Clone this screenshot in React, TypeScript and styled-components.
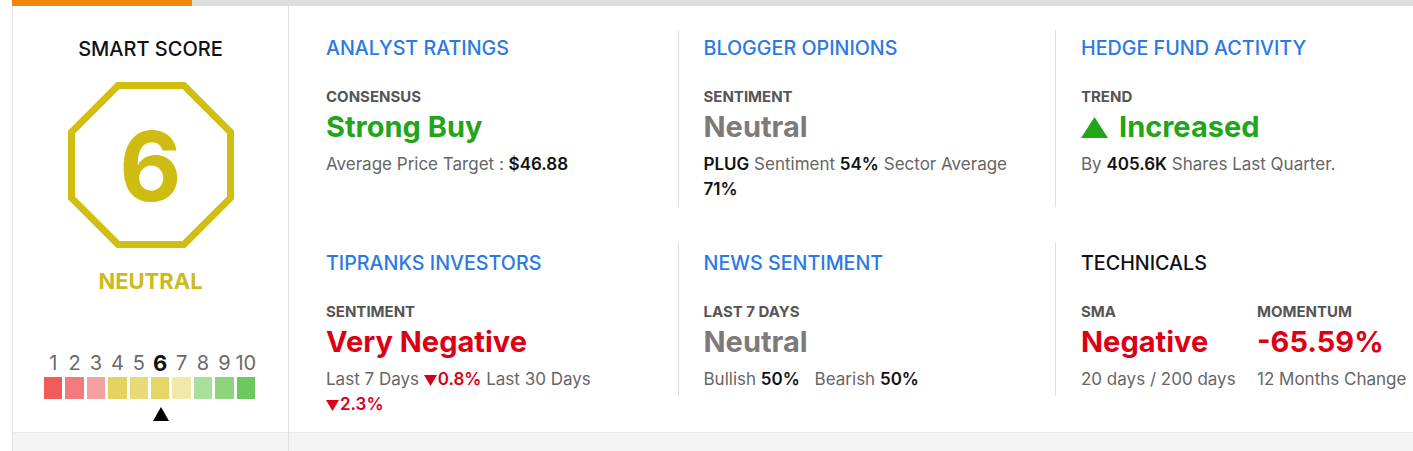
import React from "react";
import styled, { createGlobalStyle } from "styled-components";

const GlobalStyle = createGlobalStyle`
  html, body { margin: 0; padding: 0; overflow: hidden; background: #fff; }
  body { font-family: Inter, "Noto Sans", Lato, sans-serif; color: #111; }
  * { box-sizing: border-box; }
`;

const FONT = `Inter, "Noto Sans", "DejaVu Sans", sans-serif`;

const Page = styled.div`
  padding-left: 12px;
  width: 1460px;
`;

const TopBar = styled.div`
  height: 6px;
  background: #dddddd;
  display: flex;
`;

const TopBarFill = styled.div<{ $width: number }>`
  width: ${(p) => p.$width}px;
  height: 100%;
  background: #f08709;
`;

const Card = styled.div`
  display: flex;
  height: 445px;
  border-left: 1px solid #e3e3e3;
  background: #f4f4f4;
  font-family: ${FONT};
`;

const ScorePanel = styled.div`
  width: 276px;
  flex: none;
  border-right: 1px solid #e0e0e0;
`;

const ScoreBody = styled.div`
  height: 427px;
  background: #fff;
  border-bottom: 1px solid #ebebeb;
  display: flex;
  flex-direction: column;
  align-items: center;
  padding-top: 31px;
`;

const ScoreTitle = styled.div`
  font-size: 20px;
  line-height: 24px;
  font-weight: 500;
  color: #111;
`;

const OctagonWrap = styled.div`
  position: relative;
  width: 166px;
  height: 166px;
  margin-top: 21px;
  display: grid;
  place-items: center;
  svg {
    position: absolute;
    inset: 0;
  }
`;

const ScoreNumber = styled.div`
  position: relative;
  font-size: 96px;
  line-height: 1;
  font-weight: 700;
  color: #cfbc12;
  margin-top: 2px;
`;

const ScoreLabel = styled.div`
  margin-top: 20px;
  font-size: 22px;
  line-height: 26px;
  font-weight: 700;
  color: #cdbb1e;
`;

const ScaleGrid = styled.div<{ $mt: number }>`
  display: grid;
  grid-template-columns: repeat(10, 18.5px);
  column-gap: 2.9px;
  margin-top: ${(p) => p.$mt}px;
  margin-right: 2px;
`;

const ScaleDigit = styled.div<{ $active: boolean }>`
  text-align: center;
  font-size: ${(p) => (p.$active ? 22 : 20)}px;
  line-height: 22px;
  font-weight: ${(p) => (p.$active ? 700 : 400)};
  color: ${(p) => (p.$active ? "#111" : "#6a6a6a")};
  white-space: nowrap;
  display: flex;
  justify-content: center;
`;

const ScaleBox = styled.div<{ $color: string }>`
  height: 22px;
  background: ${(p) => p.$color};
`;

const ScaleMarker = styled.div<{ $col: number }>`
  grid-column: ${(p) => p.$col};
  justify-self: center;
  width: 0;
  height: 0;
  border-left: 8.5px solid transparent;
  border-right: 8.5px solid transparent;
  border-bottom: 14px solid #000;
  margin-left: 1px;
`;

const MainPanel = styled.div`
  flex: 1;
`;

const MainBody = styled.div`
  height: 427px;
  background: #fff;
  border-bottom: 1px solid #ebebeb;
  padding: 24px 0 0 12px;
`;

const Row = styled.div<{ $mt: number }>`
  display: grid;
  grid-template-columns: repeat(3, 377.5px);
  margin-top: ${(p) => p.$mt}px;
`;

const Column = styled.div<{ $height: number; $padTop: number; $last?: boolean }>`
  height: ${(p) => p.$height}px;
  padding: ${(p) => p.$padTop}px 0 0 25px;
  border-right: ${(p) => (p.$last ? "none" : "1px solid #dedede")};
  white-space: nowrap;
`;

const Heading = styled.div<{ $plain?: boolean }>`
  font-size: 19.7px;
  line-height: 24px;
  font-weight: 500;
  color: ${(p) => (p.$plain ? "#111" : "#2b79e2")};
`;

const Label = styled.div`
  margin-top: 27px;
  font-size: 15px;
  line-height: 20px;
  font-weight: 700;
  color: #555;
`;

const Value = styled.div<{ $tone: "green" | "red" | "grey" }>`
  margin-top: 3px;
  font-size: 29px;
  line-height: 34px;
  font-weight: 700;
  color: ${(p) =>
    p.$tone === "green" ? "#22a51b" : p.$tone === "red" ? "#dd0014" : "#7e7a7a"};
  display: flex;
  align-items: center;
  gap: 11px;
`;

const Sub = styled.div<{ $wrap?: number }>`
  margin-top: 7.5px;
  font-size: 17px;
  line-height: 25px;
  font-weight: 400;
  color: #666;
  white-space: ${(p) => (p.$wrap ? "normal" : "nowrap")};
  max-width: ${(p) => (p.$wrap ? `${p.$wrap}px` : "none")};
`;

const Strong = styled.b`
  font-weight: 600;
  color: #111;
`;

const Down = styled.b`
  font-weight: 600;
  color: #d7001c;
  white-space: nowrap;
  svg {
    margin-right: 1px;
    vertical-align: -1px;
  }
`;

const Spacer = styled.span`
  display: inline-block;
  width: 10px;
`;

const TechGrid = styled.div`
  display: grid;
  grid-template-columns: 176px auto;
`;

const scaleColors = [
  "#f05b5b",
  "#f47b7d",
  "#f4a0a1",
  "#e3d35f",
  "#e8da78",
  "#e5d466",
  "#f1e8aa",
  "#a8df9b",
  "#8cd57c",
  "#6dc95d",
];

const Octagon = () => (
  <svg width="166" height="166" viewBox="0 0 166 166">
    <polygon
      points="50.1,3.5 115.9,3.5 162.5,50.1 162.5,115.9 115.9,162.5 50.1,162.5 3.5,115.9 3.5,50.1"
      fill="none"
      stroke="#d1be12"
      strokeWidth="7"
    />
  </svg>
);

const UpTriangle = () => (
  <svg width="27" height="21" viewBox="0 0 27 21">
    <polygon points="13.5,0 27,21 0,21" fill="#22a51b" />
  </svg>
);

const DownTriangle = () => (
  <svg width="13" height="11" viewBox="0 0 13 11">
    <polygon points="0,0 13,0 6.5,11" fill="#d7001c" />
  </svg>
);

export default function App() {
  const score = 6;
  return (
    <>
      <GlobalStyle />
      <Page>
        <TopBar>
          <TopBarFill $width={180} />
        </TopBar>
        <Card>
          <ScorePanel>
            <ScoreBody>
              <ScoreTitle>SMART SCORE</ScoreTitle>
              <OctagonWrap>
                <Octagon />
                <ScoreNumber>{score}</ScoreNumber>
              </OctagonWrap>
              <ScoreLabel>NEUTRAL</ScoreLabel>
              <ScaleGrid $mt={58}>
                {scaleColors.map((_, i) => (
                  <ScaleDigit key={i} $active={i + 1 === score}>
                    {i + 1}
                  </ScaleDigit>
                ))}
              </ScaleGrid>
              <ScaleGrid $mt={3}>
                {scaleColors.map((c, i) => (
                  <ScaleBox key={i} $color={c} />
                ))}
              </ScaleGrid>
              <ScaleGrid $mt={8}>
                <ScaleMarker $col={score} />
              </ScaleGrid>
            </ScoreBody>
          </ScorePanel>
          <MainPanel>
            <MainBody>
              <Row $mt={0}>
                <Column $height={177} $padTop={6}>
                  <Heading>ANALYST RATINGS</Heading>
                  <Label>CONSENSUS</Label>
                  <Value $tone="green">Strong Buy</Value>
                  <Sub>
                    Average Price Target : <Strong>$46.88</Strong>
                  </Sub>
                </Column>
                <Column $height={177} $padTop={6}>
                  <Heading>BLOGGER OPINIONS</Heading>
                  <Label>SENTIMENT</Label>
                  <Value $tone="grey">Neutral</Value>
                  <Sub $wrap={320}>
                    <Strong>PLUG</Strong> Sentiment <Strong>54%</Strong> Sector Average{" "}
                    <Strong>71%</Strong>
                  </Sub>
                </Column>
                <Column $height={177} $padTop={6} $last>
                  <Heading>HEDGE FUND ACTIVITY</Heading>
                  <Label>TREND</Label>
                  <Value $tone="green">
                    <UpTriangle />
                    Increased
                  </Value>
                  <Sub>
                    By <Strong>405.6K</Strong> Shares Last Quarter.
                  </Sub>
                </Column>
              </Row>
              <Row $mt={35}>
                <Column $height={154} $padTop={9}>
                  <Heading>TIPRANKS INVESTORS</Heading>
                  <Label>SENTIMENT</Label>
                  <Value $tone="red">Very Negative</Value>
                  <Sub $wrap={290}>
                    Last 7 Days{" "}
                    <Down>
                      <DownTriangle />
                      0.8%
                    </Down>{" "}
                    Last 30 Days{" "}
                    <Down>
                      <DownTriangle />
                      2.3%
                    </Down>
                  </Sub>
                </Column>
                <Column $height={154} $padTop={9}>
                  <Heading>NEWS SENTIMENT</Heading>
                  <Label>LAST 7 DAYS</Label>
                  <Value $tone="grey">Neutral</Value>
                  <Sub>
                    Bullish <Strong>50%</Strong>
                    <Spacer /> Bearish <Strong>50%</Strong>
                  </Sub>
                </Column>
                <Column $height={154} $padTop={9} $last>
                  <Heading $plain>TECHNICALS</Heading>
                  <TechGrid>
                    <div>
                      <Label>SMA</Label>
                      <Value $tone="red">Negative</Value>
                      <Sub>20 days / 200 days</Sub>
                    </div>
                    <div>
                      <Label>MOMENTUM</Label>
                      <Value $tone="red">-65.59%</Value>
                      <Sub>12 Months Change</Sub>
                    </div>
                  </TechGrid>
                </Column>
              </Row>
            </MainBody>
          </MainPanel>
        </Card>
      </Page>
    </>
  );
}
